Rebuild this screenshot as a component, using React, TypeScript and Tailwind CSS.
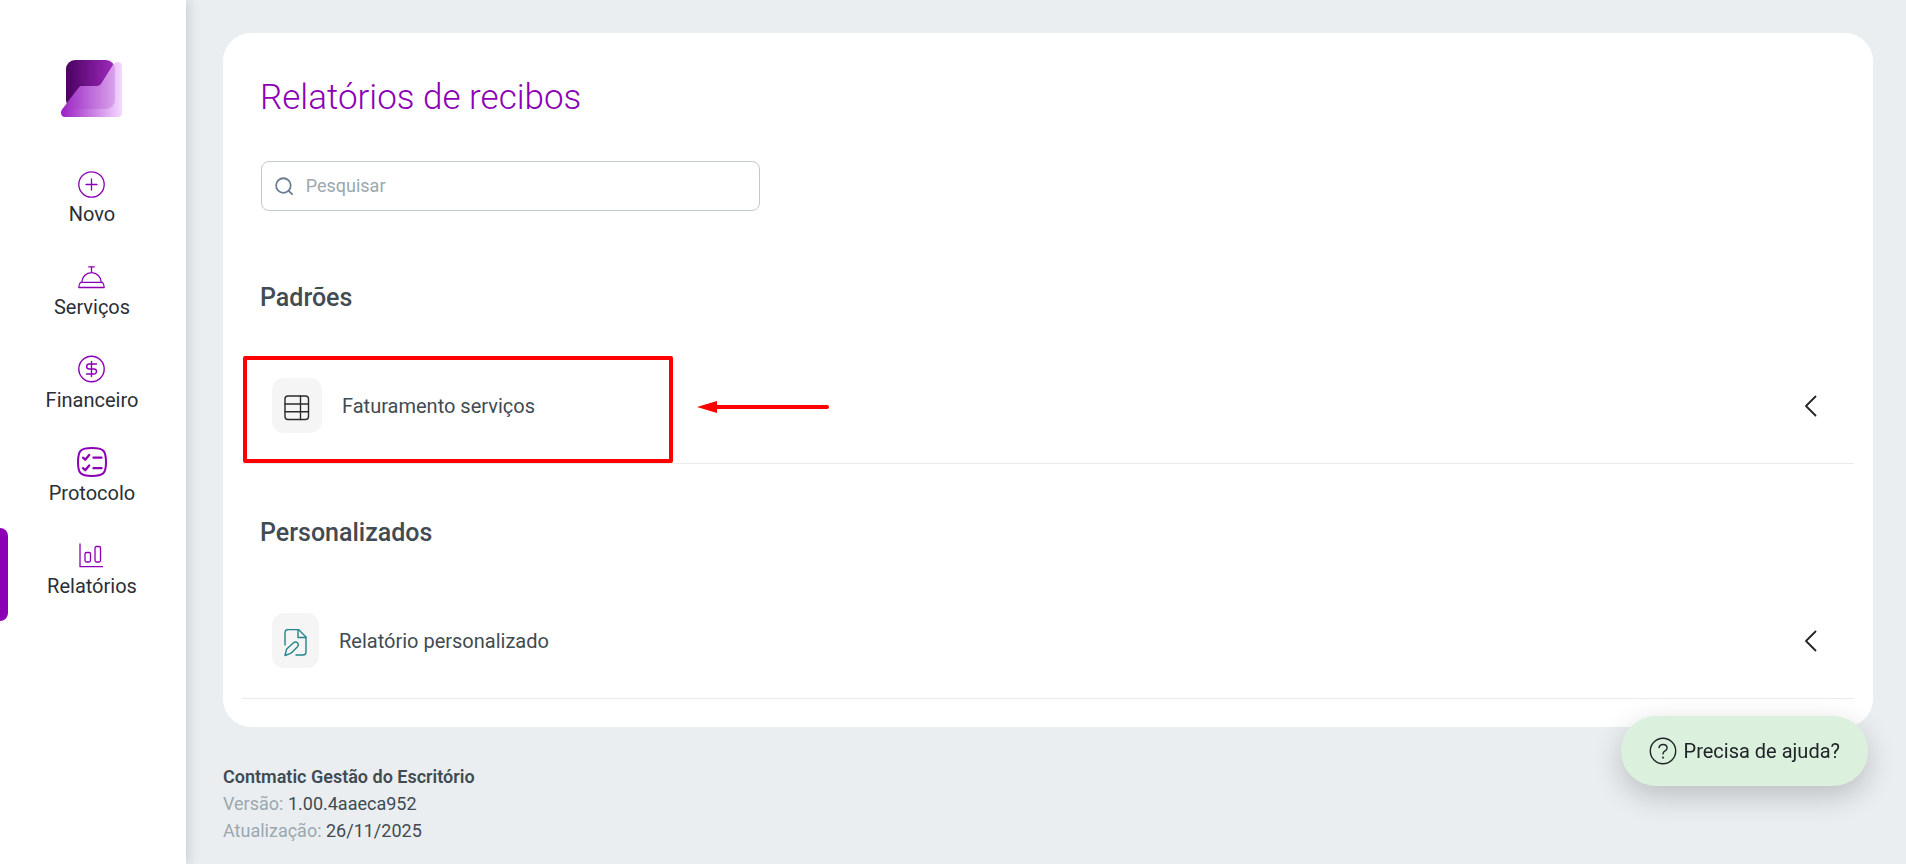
import { useState } from 'react';
import type { ReactNode } from 'react';

function Logo() {
  const wave =
    'M1 49.5 L17.6 28 Q19 26 21.4 26 H36.5 Q39 26 40.3 23.8 L52.4 4.4 Q54 2 57 2 Q61 2 61 6 V53 Q61 57 57 57 H4 C0 57 -1 52.5 1 49.5Z';
  return (
    <svg width="62" height="57" viewBox="0 0 62 57" aria-hidden="true">
      <defs>
        <linearGradient id="logo-dark" x1="0" x2="1" y1="0" y2="0">
          <stop offset="0" stopColor="#4b0061" />
          <stop offset="1" stopColor="#a02bbf" />
        </linearGradient>
        <linearGradient id="logo-light" x1="0" x2="1" y1="0" y2="0">
          <stop offset="0" stopColor="#9b1fc4" />
          <stop offset="1" stopColor="#f5d9ff" />
        </linearGradient>
        <linearGradient id="logo-mix" gradientUnits="userSpaceOnUse" x1="5" x2="54" y1="0" y2="0">
          <stop offset="0" stopColor="#a030c6" />
          <stop offset="1" stopColor="#d9a2eb" />
        </linearGradient>
        <clipPath id="logo-square">
          <rect x="5" y="0" width="49" height="49" rx="9" />
        </clipPath>
      </defs>
      <rect x="5" y="0" width="49" height="49" rx="9" fill="url(#logo-dark)" />
      <path d={wave} fill="url(#logo-light)" />
      <path d={wave} fill="url(#logo-mix)" clipPath="url(#logo-square)" />
    </svg>
  );
}

const line = { fill: 'none', stroke: 'currentColor', strokeLinecap: 'round', strokeLinejoin: 'round' } as const;

const icons: Record<string, ReactNode> = {
  novo: (
    <svg width="32" height="32" viewBox="0.5 0 32 32" {...line} strokeWidth="1.3">
      <circle cx="16" cy="16.5" r="12.7" />
      <path d="M16 11v11M10.5 16.5h11" />
    </svg>
  ),
  servicos: (
    <svg width="32" height="32" viewBox="0.5 1.2 32 32" {...line} strokeWidth="1.3">
      <path d="M13.2 7h5.6M16 7v5.7M6.3 22.5a9.7 9.7 0 0 1 19.4 0M5 22.5h22q1.7 2 1.7 5.2H3.3q0-3.2 1.7-5.2Z" />
    </svg>
  ),
  financeiro: (
    <svg width="32" height="32" viewBox="0.5 1 32 32" {...line} strokeWidth="1.4">
      <circle cx="16" cy="16" r="12.7" />
      <path d="M16 8.5v15M21 11h-7.3a2.5 2.5 0 0 0 0 5h4.8a2.500 2.500 0 0 1 0 5H11" />
    </svg>
  ),
  protocolo: (
    <svg width="32" height="32" viewBox="0.5 1.5 32 32" {...line} strokeWidth="2">
      <path d="M16.500 2.500C28 2.500 30.500 5 30.500 16.500S28 30.500 16.500 30.500 2.500 28 2.500 16.500 5 2.500 16.500 2.500Z" />
      <path d="M7.500 12.200l2.200 2 4-4.700M7.500 22.700l2.200 2 4-4.700M18 12.200h8M18 22.700h8" strokeWidth="2.300" />
    </svg>
  ),
  relatorios: (
    <svg width="32" height="32" viewBox="0.5 1 32 32" {...line} strokeWidth="1.3">
      <path d="M4.500 5v22.700H27" />
      <rect x="9.500" y="13.500" width="5.500" height="9.500" rx="1.500" />
      <rect x="19.500" y="7.500" width="5.500" height="15.500" rx="1.500" />
    </svg>
  ),
};

const menu = [
  { key: 'novo', label: 'Novo' },
  { key: 'servicos', label: 'Serviços' },
  { key: 'financeiro', label: 'Financeiro' },
  { key: 'protocolo', label: 'Protocolo' },
  { key: 'relatorios', label: 'Relatórios' },
];

function Sidebar({ active }: { active: string }) {
  return (
    <aside className="relative z-10 flex w-[186px] shrink-0 flex-col items-center bg-white pt-[60px] pr-[2px] shadow-[2px_0_12px_rgba(0,0,0,0.15)]">
      <Logo />
      <nav className="mt-[39px] w-full">
        {menu.map((m) => (
          <a key={m.key} href={`#${m.key}`} className="relative flex h-[93px] flex-col items-center pt-3 text-xl leading-7 text-[#2b2f36]">
            {m.key === active && <span className="absolute inset-y-0 left-0 w-2 rounded-r-lg bg-[#8b00b5]" />}
            <span className="text-[#8b00b5]">{icons[m.key]}</span>
            {m.label}
          </a>
        ))}
      </nav>
    </aside>
  );
}

function TableIcon() {
  return (
    <svg width="26" height="26" viewBox="0 0 26 26" {...line} stroke="#2b2b2b" strokeWidth="1.4">
      <rect x="1" y="1" width="23.5" height="23.5" rx="3" />
      <path d="M1 9h23.5M1 16.7h23.5M16.5 1v23.5" />
    </svg>
  );
}

function FileEditIcon() {
  return (
    <svg width="23" height="28" viewBox="0 0.5 23 28" {...line} stroke="#23858a" strokeWidth="1.4">
      <path d="M1 16.5V4q0-3 3-3h10.500L22 8.500V23.500q0 3-3 3h-7" />
      <path d="M14 1v8h8" />
      <path d="M1 27l1.300-5.500q.3-1 1.200-1.800l6-5.500q2-1.400 4 0 1.600 1.900 0 4l-5.700 5.800q-.8.800-1.800 1.200Z" />
    </svg>
  );
}

function ReportRow({ icon, label, children }: { icon: ReactNode; label: string; children?: ReactNode }) {
  return (
    <div className="relative border-b border-[#e9ebec]">
      <button type="button" className="flex h-[115px] w-full items-center pr-[37px] pl-[30px] text-left">
        <span className="flex h-[55px] items-center rounded-xl bg-[#f5f5f5] px-3 pt-1">{icon}</span>
        <span className="ml-5 text-xl text-[#414b52]">{label}</span>
        <svg className="ml-auto" width="13" height="22" viewBox="0 0 13 22" {...line} stroke="#212529" strokeWidth="1.8">
          <path d="M11.5 1.5 2 11l9.5 9.5" />
        </svg>
      </button>
      {children}
    </div>
  );
}

function Section({ title, children }: { title: string; children: ReactNode }) {
  return (
    <section className="pt-[51px]">
      <h2 className="mb-8 px-[18px] text-[25px] leading-9 font-medium text-[#414b52]">{title}</h2>
      {children}
    </section>
  );
}

export default function App() {
  const [search, setSearch] = useState('');

  return (
    <div className="flex min-h-screen bg-[#eaeef1] font-[Roboto,sans-serif]">
      <Sidebar active="relatorios" />
      <main className="flex-1 pt-[33px] pr-[33px] pl-[37px]">
        <div className="rounded-[28px] bg-white px-[19px] pt-[41px] pb-7">
          <h1 className="px-[18px] text-[35px] leading-[48px] font-light text-[#8b00b5]">Relatórios de recibos</h1>
          <label className="mx-[19px] mt-[39px] mb-[18px] flex h-[50px] max-w-[499px] items-center gap-3 rounded-lg border border-[#c1c9d0] px-[13px]">
            <svg width="20" height="20" viewBox="0 0 20 20" {...line} stroke="#6b7c8f" strokeWidth="1.9" aria-hidden="true">
              <circle cx="9" cy="9.5" r="7.8" />
              <path d="m14.6 15.1 3.700 3.700" />
            </svg>
            <input
              type="text"
              aria-label="Pesquisar"
              placeholder="Pesquisar"
              value={search}
              onChange={(e) => setSearch(e.target.value)}
              className="w-full bg-transparent text-lg text-[#414b52] outline-none placeholder:text-[#9ba8ae]"
            />
          </label>

          <Section title="Padrões">
            <ReportRow icon={<TableIcon />} label="Faturamento serviços">
              <div className="pointer-events-none absolute top-2 left-px flex items-center gap-6">
                <div className="h-[107px] w-[430px] rounded-xs border-4 border-[#ff0000]" />
                <svg width="132" height="14" viewBox="0 0 132 14" className="-mt-1.5">
                  <path d="M18 7H130" stroke="#ff0000" strokeWidth="4" strokeLinecap="round" />
                  <path d="M0 7 20 1V13Z" fill="#ff0000" />
                </svg>
              </div>
            </ReportRow>
          </Section>

          <Section title="Personalizados">
            <ReportRow icon={<FileEditIcon />} label="Relatório personalizado" />
          </Section>
        </div>

        <footer className="mt-9 text-lg leading-[27px] text-[#414b52]">
          <p className="font-semibold">Contmatic Gestão do Escritório</p>
          <p>
            <span className="text-[#9ba8ae]">Versão:</span> 1.00.4aaeca952
          </p>
          <p>
            <span className="text-[#9ba8ae]">Atualização:</span> 26/11/2025
          </p>
        </footer>
      </main>

      <button
        type="button"
        className="fixed right-[38px] bottom-[78px] z-20 flex h-[70px] items-center gap-[7px] rounded-full bg-[#dbf0dd] px-7 text-xl text-[#212529] shadow-[0_10px_30px_rgba(0,0,0,0.2)]"
      >
        <svg width="28" height="28" viewBox="0 0 28 28" {...line} strokeWidth="1.4" aria-hidden="true">
          <circle cx="14" cy="14" r="12.7" />
          <path d="M10 10.5q.6-3 4-3 3.900 0 4.100 3.200 0 1.900-2 3.200-2.100 1.200-2.100 3" />
          <circle cx="14" cy="20.600" r=".4" />
        </svg>
        Precisa de ajuda?
      </button>
    </div>
  );
}
